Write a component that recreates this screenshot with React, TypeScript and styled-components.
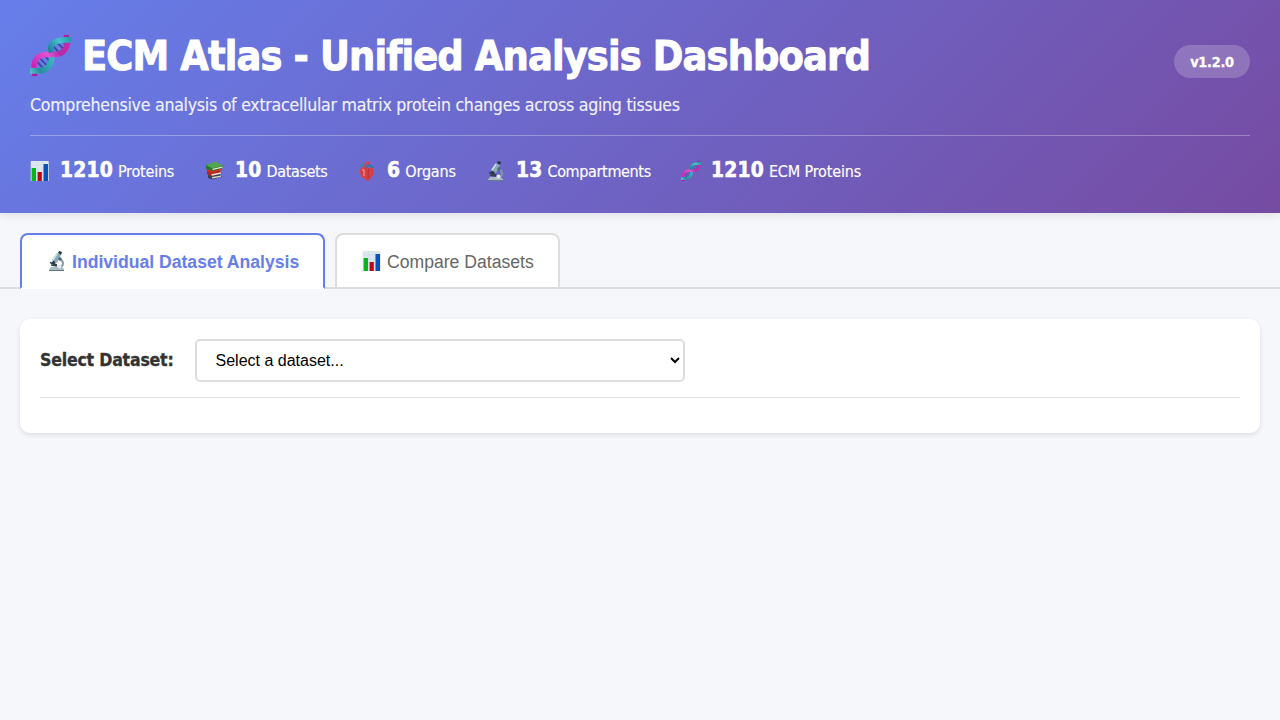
import React from "react";
import styled, { createGlobalStyle } from "styled-components";

const GlobalStyle = createGlobalStyle`
  * { box-sizing: border-box; margin: 0; padding: 0; }
  body {
    min-height: 100vh;
    background: #f5f7fb;
    color: #333;
    font-family: "DejaVu Sans Condensed", "DejaVu Sans", sans-serif;
    font-stretch: condensed;
  }
`;

const Header = styled.header`
  position: relative;
  height: 213px;
  padding: 30px 30px 0;
  color: #fff;
  background: linear-gradient(135deg, #667eea 0%, #764ba2 100%);
  box-shadow: 0 2px 10px rgba(0, 0, 0, 0.1);
`;

const HeaderTop = styled.div`
  display: flex;
  justify-content: space-between;
  align-items: flex-start;
  height: 105px;
`;

const Title = styled.h1`
  display: flex;
  align-items: center;
  gap: 11px;
  height: 51px;
  font-size: 41px;
  font-weight: 700;
  line-height: 51px;
  letter-spacing: -0.87px;
  white-space: nowrap;

  span {
    padding-top: 1px;
    -webkit-text-stroke: 0.9px currentColor;
  }
`;

const Subtitle = styled.p`
  margin-top: 13px;
  font-size: 17.6px;
  line-height: 22px;
  letter-spacing: -0.265px;
  opacity: 0.9;
  -webkit-text-stroke: 0.15px currentColor;
`;

const Version = styled.span`
  display: flex;
  align-items: center;
  justify-content: center;
  width: 76px;
  height: 33px;
  margin-top: 15px;
  border-radius: 20px;
  background: rgba(255, 255, 255, 0.2);
  font-size: 14.4px;
  font-weight: 700;
  letter-spacing: -0.3px;
  -webkit-text-stroke: 0.3px currentColor;
`;

const Stats = styled.div`
  display: flex;
  height: 78px;
  padding-top: 20px;
  border-top: 1px solid rgba(255, 255, 255, 0.3);
`;

const Stat = styled.div<{ $width: number }>`
  display: flex;
  align-items: baseline;
  width: ${(p) => p.$width}px;
  height: 30px;
  line-height: 28px;
  white-space: nowrap;

  svg { align-self: flex-start; margin: 5px 10px 0 0; }
`;

const StatValue = styled.strong`
  margin-right: 5px;
  font-size: 20.8px;
  font-weight: 700;
  letter-spacing: 0.2px;
  -webkit-text-stroke: 0.6px currentColor;
`;

const StatLabel = styled.span<{ $tracking: number }>`
  font-size: 16px;
  letter-spacing: ${(p) => p.$tracking}px;
  -webkit-text-stroke: 0.15px currentColor;
`;

const Tabs = styled.nav`
  display: flex;
  gap: 10px;
  height: 76px;
  padding: 20px 20px 0;
  border-bottom: 2px solid #ddd;
`;

const Tab = styled.button<{ $active?: boolean; $width: number }>`
  display: flex;
  align-items: center;
  gap: 5px;
  width: ${(p) => p.$width}px;
  height: 56px;
  padding: 0 0 0 25px;
  border: 2px solid ${(p) => (p.$active ? "#667eea" : "#ddd")};
  border-bottom-color: ${(p) => (p.$active ? "#fff" : "#ddd")};
  border-radius: 8px 8px 0 0;
  background: #fff;
  color: ${(p) => (p.$active ? "#667eea" : "#666")};
  font-family: "Liberation Sans", Arial, sans-serif;
  font-size: 17.6px;
  font-weight: ${(p) => (p.$active ? 700 : 400)};
  white-space: nowrap;

  span { padding-top: 2px; }
`;

const Card = styled.section`
  height: 114px;
  margin: 30px 20px 0;
  padding: 20px;
  border-radius: 10px;
  background: #fff;
  box-shadow: 0 2px 5px rgba(0, 0, 0, 0.1);
`;

const Selector = styled.div`
  display: flex;
  align-items: center;
  height: 59px;
  padding-bottom: 16px;
  border-bottom: 1px solid #e0e0e0;
`;

const Label = styled.label`
  width: 155px;
  font-size: 17.6px;
  font-weight: 700;
  letter-spacing: -0.22px;
  white-space: nowrap;
  -webkit-text-stroke: 0.3px currentColor;
`;

const Select = styled.select`
  width: 490px;
  height: 43px;
  padding: 0 14.5px;
  border: 2px solid #ddd;
  border-radius: 5px;
  background-color: #fff;
  color: #000;
  font-family: "Liberation Sans", Arial, sans-serif;
  font-size: 16px;
`;

type IconProps = { size: number };

const DnaIcon = ({ size }: IconProps) => {
  const id = "dna" + size;
  return (
    <svg width={size} height={size} viewBox="0 0 40 40" fill="none">
      <defs>
        <linearGradient id={id + "t"} x1="18" y1="16" x2="40" y2="2" gradientUnits="userSpaceOnUse">
          <stop offset="0" stopColor="#187f96" />
          <stop offset=".55" stopColor="#46c2cc" />
          <stop offset="1" stopColor="#2297a5" />
        </linearGradient>
        <linearGradient id={id + "b"} x1="0" y1="36" x2="24" y2="24" gradientUnits="userSpaceOnUse">
          <stop offset="0" stopColor="#4fc3cc" />
          <stop offset=".35" stopColor="#268d9c" />
          <stop offset="1" stopColor="#3bb9c8" />
        </linearGradient>
        <linearGradient id={id + "p"} x1="2" y1="30" x2="38" y2="8" gradientUnits="userSpaceOnUse">
          <stop offset="0" stopColor="#cc22b4" />
          <stop offset=".45" stopColor="#e354d2" />
          <stop offset=".7" stopColor="#b42ba8" />
          <stop offset="1" stopColor="#c92aaf" />
        </linearGradient>
      </defs>
      <path d="M7 26L14 34M10 23L19 32M15 21L21 27M21 9L29 18M25 6L33 14M30 5L36 10" stroke="#3c45a0" strokeWidth="1.7" />
      <path d="M12 23L20 31M23 8L31 16" stroke="#5b91dc" strokeWidth=".9" />
      <path d="M33 0H38V4H33ZM2 36H7V40H2Z" fill="#aa1c98" />
      <path d="M0 35H7C17 35 21 30 21.5 20" stroke={`url(#${id}b)`} strokeWidth="5.5" />
      <path d="M4 32C4 22 9 19.5 16 19C25 19 34 21 37 7" stroke={`url(#${id}p)`} strokeWidth="5.5" />
      <path d="M21 17C18 8 24 4.5 40 4.5" stroke={`url(#${id}t)`} strokeWidth="5.5" />
    </svg>
  );
};

const ChartIcon = ({ size }: IconProps) => (
  <svg width={size} height={size} viewBox="0 0 20 20">
    <path d="M.7 0H18.7V20H.7Z" fill="#dce7f0" />
    <path d="M1 4H19M1 8H19M1 12H19M1 16H19M7 0V20M13 0V20" stroke="#c5d3df" strokeWidth=".4" />
    <path d="M1.6 7H6V20H1.6Z" fill="#08b51b" />
    <path d="M7.6 11H11.8V20H7.6Z" fill="#b90812" />
    <path d="M13.5 3H18V20H13.5Z" fill="#0a51b8" />
  </svg>
);

const BooksIcon = ({ size }: IconProps) => (
  <svg width={size} height={size} viewBox="0 0 20 20">
    <path d="M3 14L14 12L17 16L7 18.5L3 17Z" fill="#34435c" />
    <path d="M7 16L16 14.5V16L7 17.5Z" fill="#d9d2c8" />
    <path d="M2 10L14 9L17 12L6 15.5L2 13Z" fill="#a82720" />
    <path d="M6 13.2L16 11.3V12.8L7 14.7Z" fill="#e8dfd2" />
    <path d="M1.5 7L15 6L17 9L6 12L2 10Z" fill="#d52b20" />
    <path d="M1 4L11 1L18 5V7L7 10L1 7.5Z" fill="#247832" />
    <path d="M7.5 7.8L17.5 5.5V6.8L7.5 9Z" fill="#e5e8d2" />
    <path d="M1 4L11 .5L18 5L7 7.3Z" fill="#55a650" />
  </svg>
);

const HeartIcon = ({ size }: IconProps) => (
  <svg width={size} height={size} viewBox="0 0 20 20" fill="none">
    <path d="M6.5 9L5.5 2M6 6L3 4.5" stroke="#3c84ad" strokeWidth="1.7" />
    <path d="M8 7V4C8 1.5 12 2 13 5M9 3V.5M11 3L12 .5" stroke="#d04450" strokeWidth="1.7" />
    <path d="M9 8C9 3.5 14 3.5 16 7" stroke="#2e78a8" strokeWidth="2" />
    <path d="M4 7C6 5 9 7 11 7C15 5.5 17 8 16.5 11C16 16 13 18 11 20C7 18.5 3 15 3 11C3 9 3 8 4 7Z" fill="#d64045" />
    <path d="M5 9C7 8 7.5 10 7 15" stroke="#ef7771" strokeWidth="1.8" />
    <path d="M12 8C10 11 12 13 11 18" stroke="#a92b3b" strokeWidth=".8" />
  </svg>
);

const MicroscopeIcon = ({ size }: IconProps) => (
  <svg width={size} height={size} viewBox="0 0 20 20" fill="none">
    <path d="M13 8C18 11 16 16 12 17" stroke="#8299a4" strokeWidth="2" />
    <path d="M2 18.5L4 16H14L17 18V20H2Z" fill="#a9bac2" />
    <path d="M2 19.5H17" stroke="#667a84" />
    <path d="M3 11.5L10 14M4 14L10 15" stroke="#31414a" strokeWidth="1.7" />
    <path d="M8 9L6 13" stroke="#263840" strokeWidth="3" />
    <path d="M10 2L14 4L10 12L5 9Z" fill="#87a9b9" />
    <path d="M10 3L6 9" stroke="#c9dfe8" strokeWidth="1.5" />
    <path d="M11 2L12 0L15 1L14 4Z" fill="#26343c" />
    <circle cx="13" cy="8" r="1.7" fill="#4d6672" />
    <circle cx="12.5" cy="15.5" r="2" fill="#e2eaed" />
  </svg>
);

const stats = [
  { Icon: ChartIcon, value: "1210", label: "Proteins", width: 175, tracking: -0.2 },
  { Icon: BooksIcon, value: "10", label: "Datasets", width: 152, tracking: -0.35 },
  { Icon: HeartIcon, value: "6", label: "Organs", width: 129, tracking: -0.15 },
  { Icon: MicroscopeIcon, value: "13", label: "Compartments", width: 195, tracking: -0.35 },
  { Icon: DnaIcon, value: "1210", label: "ECM Proteins", width: 181, tracking: -0.15 },
];

export default function App() {
  return (
    <>
      <GlobalStyle />
      <Header>
        <HeaderTop>
          <div>
            <Title><DnaIcon size={41} /><span>ECM Atlas - Unified Analysis Dashboard</span></Title>
            <Subtitle>Comprehensive analysis of extracellular matrix protein changes across aging tissues</Subtitle>
          </div>
          <Version>v1.2.0</Version>
        </HeaderTop>
        <Stats>
          {stats.map(({ Icon, value, label, width, tracking }) => (
            <Stat key={label} $width={width}>
              <Icon size={20} />
              <StatValue>{value}</StatValue>
              <StatLabel $tracking={tracking}>{label}</StatLabel>
            </Stat>
          ))}
        </Stats>
      </Header>
      <Tabs>
        <Tab $active $width={305}><MicroscopeIcon size={20} /><span>Individual Dataset Analysis</span></Tab>
        <Tab $width={225}><ChartIcon size={20} /><span>Compare Datasets</span></Tab>
      </Tabs>
      <Card>
        <Selector>
          <Label htmlFor="dataset">Select Dataset:</Label>
          <Select id="dataset"><option>Select a dataset...</option></Select>
        </Selector>
      </Card>
    </>
  );
}
